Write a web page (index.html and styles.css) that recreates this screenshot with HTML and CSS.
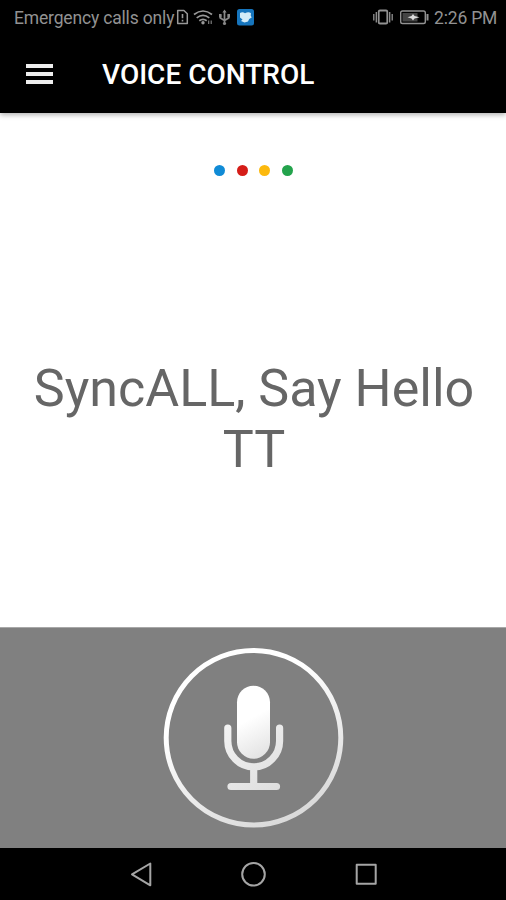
FILE: index.html
```html
<!DOCTYPE html>
<html lang="en">
<head>
<meta charset="utf-8">
<title>Voice Control</title>
<link rel="stylesheet" href="styles.css">
</head>
<body>
<div class="screen">
  <div class="status">
    <span class="carrier">Emergency calls only</span>
    <svg class="left-icons" width="80" height="20" viewBox="0 0 80 20" fill="none">
      <path d="M2.700 2.500h6.200l3.400 3.300v9.700H2.700z" stroke="#999" stroke-width="1.500" stroke-linejoin="round"/>
      <path d="M7.500 6v4.200M7.500 11.800v1.600" stroke="#999" stroke-width="1.600"/>
      <path d="M19 6.500q9-7 18 0M21.700 9.800q6.300-5 12.600 0M24.300 12.700q3.700-2.800 7.400 0" stroke="#999" stroke-width="1.700"/>
      <circle cx="28" cy="14.800" r="1.700" fill="#999"/>
      <path d="M33.700 12.500v3.500M36.200 12.500v3.500" stroke="#888" stroke-width="1.100"/>
      <path d="M49.500 3v13M45.300 7v3l4.200 2.500 4.200-2.500v-3" stroke="#888" stroke-width="1.700"/>
      <path d="M47.400 4.500l2.100-3 2.100 3zM44 6h2.600v3.500h-2.600zM52.400 6h2.600v3.500h-2.600z" fill="#888"/>
      <circle cx="49.500" cy="15.500" r="1.600" fill="#888"/>
      <rect x="62" y="1" width="17" height="16.500" rx="2.500" fill="#1675bd"/>
      <path d="M65 5q2.500-1.500 5 .2 3.500-2 6 0l-.3 2.300 1 2-2.500 1.500-1.200 2.500-3.500 1-3.500-1.500 1.500-1.500-2.500-2z" fill="#d3ecf8"/>
    </svg>
    <svg class="right-icons" width="58" height="20" viewBox="0 0 58 20" fill="none" stroke="#929292">
      <rect x="5.700" y="2.500" width="8.600" height="13" rx="1.300" stroke-width="1.800"/>
      <path d="M3.300 4v10.500M.8 6v6.500M16.700 4v10.500M19.200 6v6.500" stroke-width="1.300"/>
      <rect x="27.700" y="3" width="24.600" height="12.500" rx="1.800" stroke-width="1.400"/>
      <path d="M29.500 5h15v8.500h-15z" fill="#444" stroke="none"/>
      <path d="M54.500 6v6.500" stroke-width="2"/>
      <path d="M34.500 9.300l4-1.400 1.500-2 1.500 2 5 1.400-5 1.200-1.500 2-1.500-2z" fill="#ddd" stroke="none"/>
    </svg>
    <span class="clock">2:26 PM</span>
  </div>
  <header class="appbar">
    <div class="menu"><i></i><i></i><i></i></div>
    <h1>VOICE CONTROL</h1>
  </header>
  <main class="content">
    <div class="dots"><i class="blue"></i><i class="red"></i><i class="yellow"></i><i class="green"></i></div>
    <p class="phrase">SyncALL, Say Hello<br>TT</p>
  </main>
  <div class="mic-panel">
    <svg width="182" height="182" viewBox="0 0 182 182" fill="none">
      <defs>
        <linearGradient id="ring" gradientUnits="userSpaceOnUse" x1="50" y1="15" x2="130" y2="170"><stop offset=".25" stop-color="#fff"/><stop offset="1" stop-color="#dadada"/></linearGradient>
        <linearGradient id="body" gradientUnits="userSpaceOnUse" x1="76" y1="50" x2="110" y2="112"><stop offset=".35" stop-color="#fff"/><stop offset="1" stop-color="#dedede"/></linearGradient>
        <linearGradient id="stand" gradientUnits="userSpaceOnUse" x1="62" y1="75" x2="115" y2="145"><stop stop-color="#f4f4f4"/><stop offset="1" stop-color="#dedede"/></linearGradient>
      </defs>
      <circle cx="91.500" cy="90.700" r="87.300" stroke="url(#ring)" stroke-width="5"/>
      <rect x="75" y="38.700" width="33" height="73" rx="16.500" fill="url(#body)"/>
      <path d="M65.800 81v13a25.900 25.900 0 0 0 51.800 0V81M91.700 121v15.500M69 139.500h45.500" stroke="url(#stand)" stroke-width="7.200" stroke-linecap="round"/>
    </svg>
  </div>
  <nav class="navbar">
    <svg width="506" height="52" viewBox="0 0 506 52" fill="none" stroke="#a5a5a5" stroke-width="2" stroke-linejoin="round">
      <path d="M132 26.300L150.300 15.500v21.800z"/>
      <circle cx="253.500" cy="26.300" r="11.300"/>
      <rect x="356.700" y="16.700" width="19" height="19"/>
    </svg>
  </nav>
</div>
</body>
</html>
```
FILE: styles.css
```css
* { box-sizing: border-box; }
body { margin: 0; background: #000; font-family: Roboto, "Liberation Sans", sans-serif; }
.screen { width: 506px; height: 900px; display: flex; flex-direction: column; overflow: hidden; }
.status { height: 36px; padding: 0 11px 0 14px; display: flex; align-items: center; background: #000; color: #929292; font-size: 17.500px; letter-spacing: -.17px; line-height: 36px; white-space: nowrap; }
.carrier { width: 161px; flex: none; }
.left-icons { flex: none; }
.right-icons { flex: none; margin-left: auto; }
.clock { width: 61px; margin-left: 3px; flex: none; }
.appbar { position: relative; height: 77px; padding: 0 26px; display: flex; align-items: center; background: #000; box-shadow: 0 2px 5px rgba(0,0,0,.3); }
.menu { width: 27px; display: grid; gap: 4px; margin-top: -2px; }
.menu i { height: 4px; background: #eee; }
h1 { margin: 0 0 0 49px; color: #fff; font-size: 28px; font-weight: 500; line-height: 34px; white-space: nowrap; }
.content { height: 514px; background: #fff; }
.dots { display: flex; justify-content: center; gap: 11.500px; padding: 51.500px 0 0 1px; }
.dots i { width: 11px; height: 11px; border-radius: 50%; }
.blue { background: #108bd6; }
.red { background: #d51d18; }
.yellow { background: #fcb90e; }
.green { background: #23a34c; }
.phrase { margin: 182px 0 0; padding-left: 2px; color: #666; font-size: 52px; line-height: 61px; text-align: center; white-space: nowrap; }
.mic-panel { height: 221px; border-top: 1px solid #a8a8a8; display: flex; justify-content: center; align-items: center; background: #808080; }
.navbar { height: 52px; background: #000; }
.navbar svg { display: block; }
```
